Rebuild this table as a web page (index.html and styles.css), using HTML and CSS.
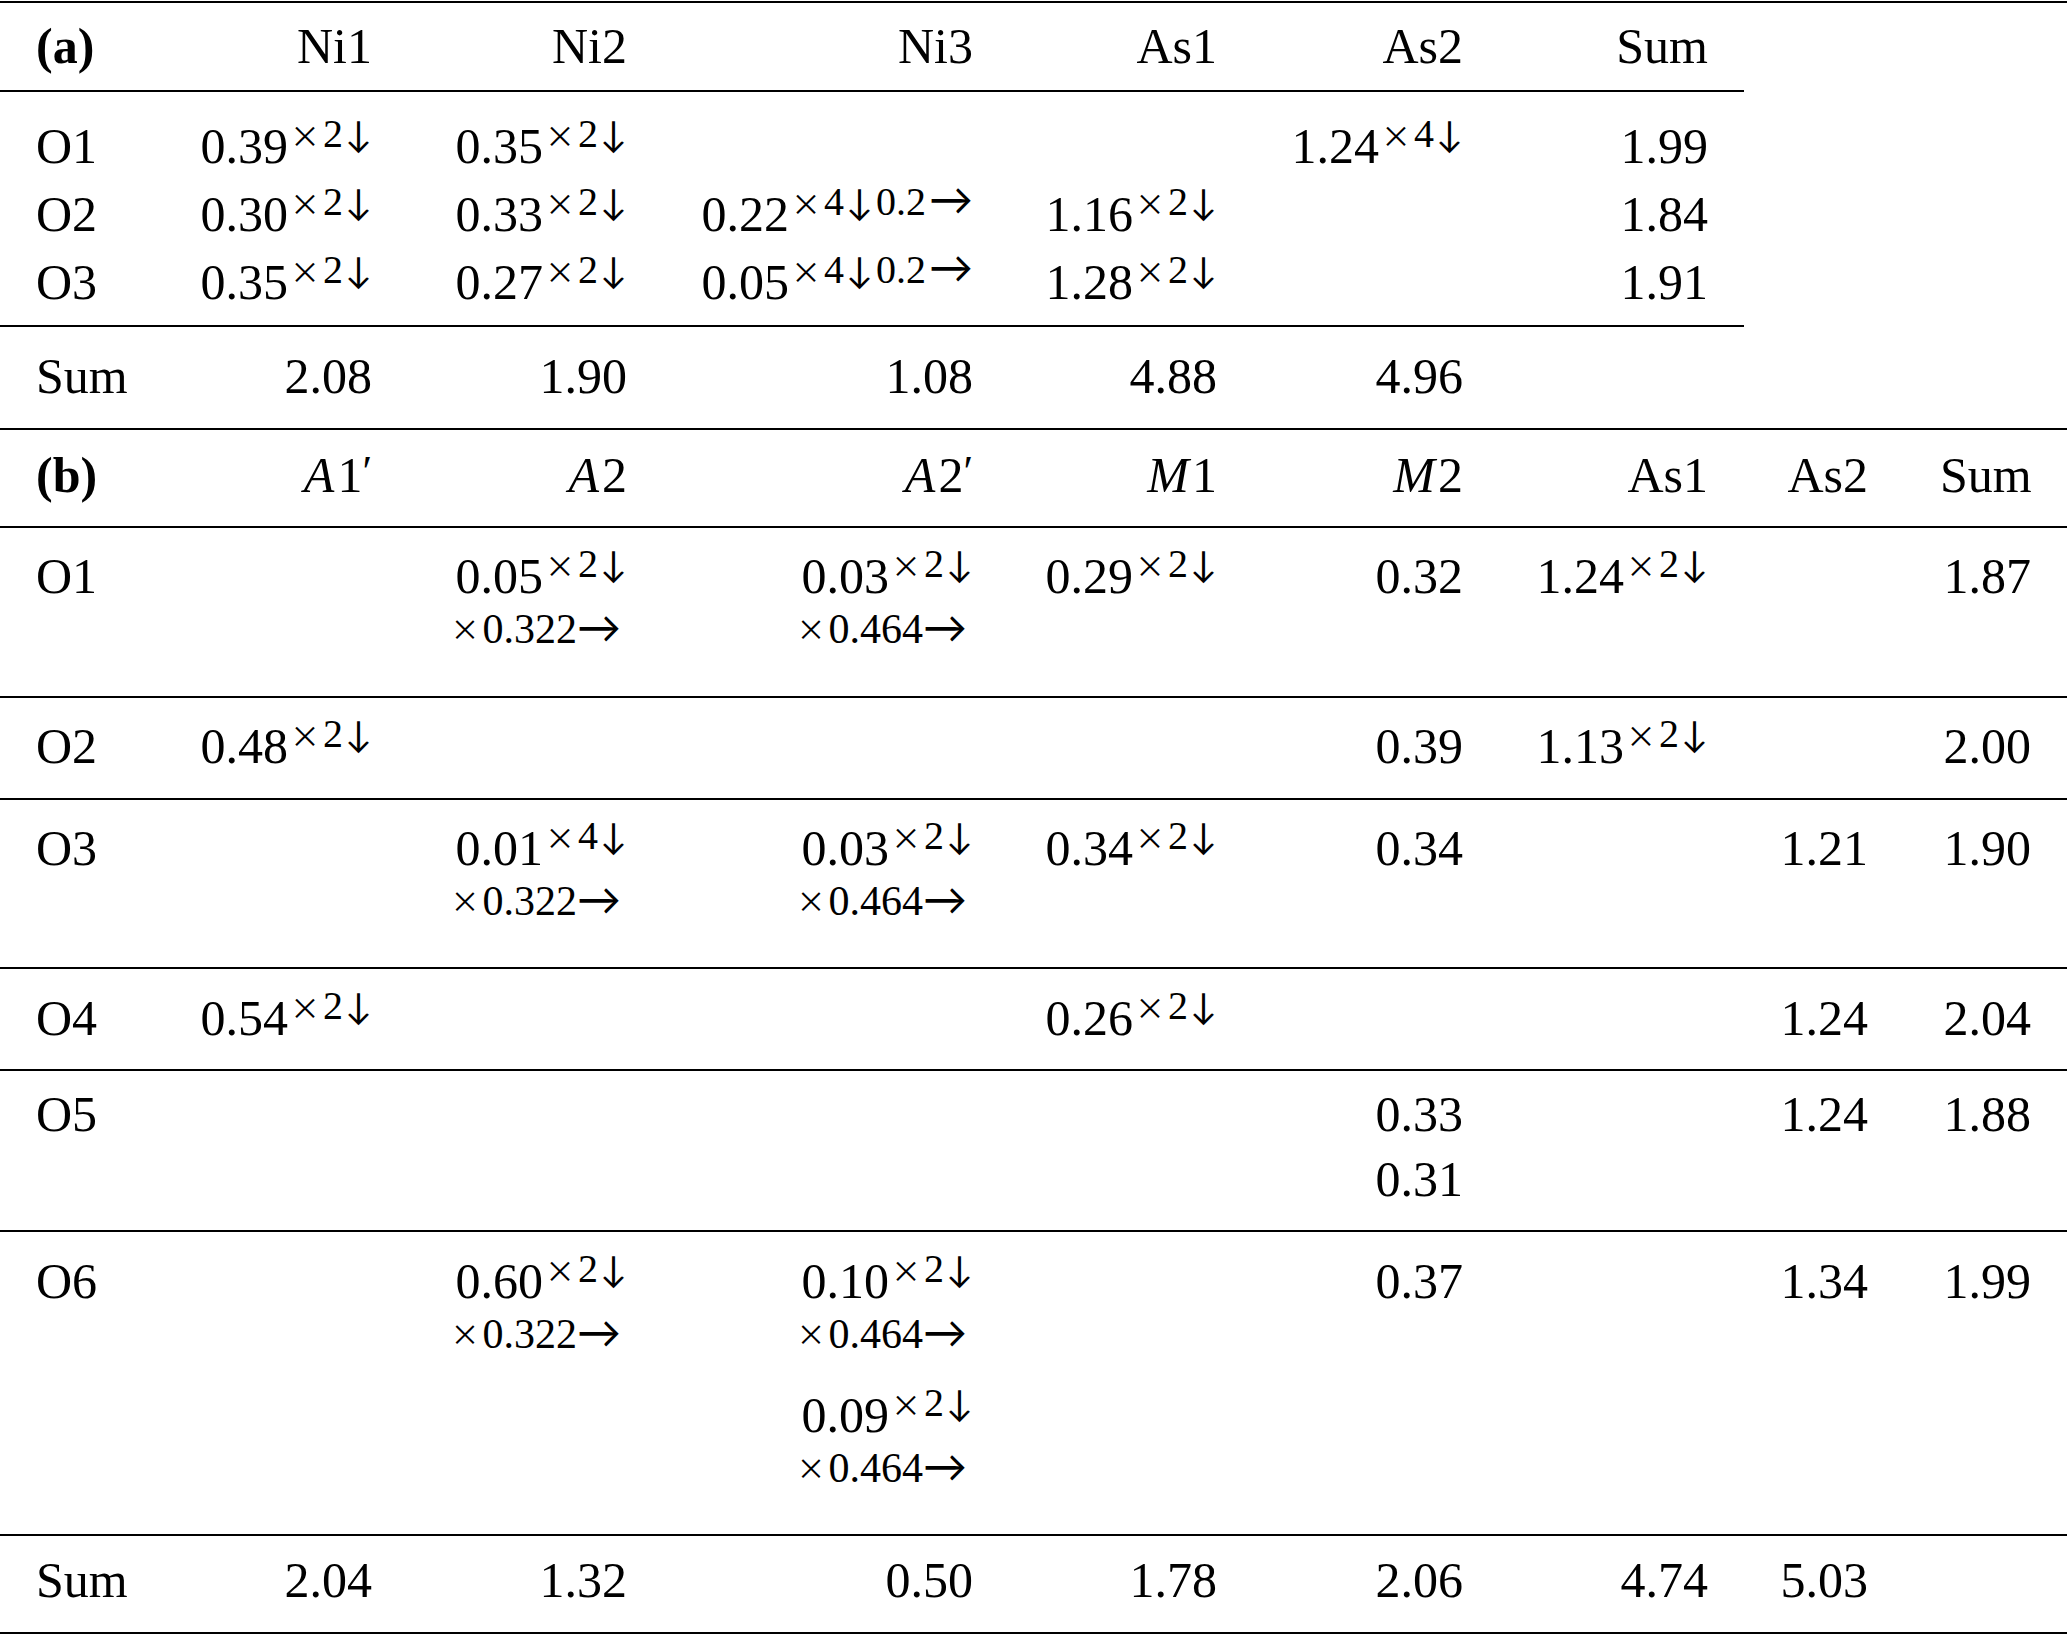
FILE: index.html
```html
<!DOCTYPE html>
<html>
<head>
<meta charset="utf-8">
<link rel="stylesheet" href="styles.css">
</head>
<body>
<div class="tbl">
  <div class="part-a">
    <div class="row row-a rule head-a">
      <div class="c l"><div class="v"><b>(a)</b></div></div>
      <div class="c"><div class="v">Ni1</div></div>
      <div class="c"><div class="v">Ni2</div></div>
      <div class="c"><div class="v">Ni3</div></div>
      <div class="c"><div class="v">As1</div></div>
      <div class="c"><div class="v">As2</div></div>
      <div class="c"><div class="v">Sum</div></div>
    </div>
    <div class="body-a rule">
      <div class="row row-a">
        <div class="c l"><div class="v">O1</div></div>
        <div class="c"><div class="v">0.39<span class="s"><span class="x">×</span>2<span class="ad">↓</span></span></div></div>
        <div class="c"><div class="v">0.35<span class="s"><span class="x">×</span>2<span class="ad">↓</span></span></div></div>
        <div class="c"></div>
        <div class="c"></div>
        <div class="c"><div class="v">1.24<span class="s"><span class="x">×</span>4<span class="ad">↓</span></span></div></div>
        <div class="c"><div class="v">1.99</div></div>
      </div>
      <div class="row row-a">
        <div class="c l"><div class="v">O2</div></div>
        <div class="c"><div class="v">0.30<span class="s"><span class="x">×</span>2<span class="ad">↓</span></span></div></div>
        <div class="c"><div class="v">0.33<span class="s"><span class="x">×</span>2<span class="ad">↓</span></span></div></div>
        <div class="c"><div class="v">0.22<span class="s"><span class="x">×</span>4<span class="ad mid">↓</span>0.2<span class="ar">→</span></span></div></div>
        <div class="c"><div class="v">1.16<span class="s"><span class="x">×</span>2<span class="ad">↓</span></span></div></div>
        <div class="c"></div>
        <div class="c"><div class="v">1.84</div></div>
      </div>
      <div class="row row-a">
        <div class="c l"><div class="v">O3</div></div>
        <div class="c"><div class="v">0.35<span class="s"><span class="x">×</span>2<span class="ad">↓</span></span></div></div>
        <div class="c"><div class="v">0.27<span class="s"><span class="x">×</span>2<span class="ad">↓</span></span></div></div>
        <div class="c"><div class="v">0.05<span class="s"><span class="x">×</span>4<span class="ad mid">↓</span>0.2<span class="ar">→</span></span></div></div>
        <div class="c"><div class="v">1.28<span class="s"><span class="x">×</span>2<span class="ad">↓</span></span></div></div>
        <div class="c"></div>
        <div class="c"><div class="v">1.91</div></div>
      </div>
    </div>
    <div class="row row-a sum-a">
      <div class="c l"><div class="v">Sum</div></div>
      <div class="c"><div class="v">2.08</div></div>
      <div class="c"><div class="v">1.90</div></div>
      <div class="c"><div class="v">1.08</div></div>
      <div class="c"><div class="v">4.88</div></div>
      <div class="c"><div class="v">4.96</div></div>
      <div class="c"></div>
    </div>
  </div>

  <div class="part-b">
    <div class="row row-b rule head-b">
      <div class="c l"><div class="v"><b>(b)</b></div></div>
      <div class="c"><div class="v"><i class="it">A</i>1<span class="pr">′</span></div></div>
      <div class="c"><div class="v"><i class="it">A</i>2</div></div>
      <div class="c"><div class="v"><i class="it">A</i>2<span class="pr">′</span></div></div>
      <div class="c"><div class="v"><i class="it">M</i>1</div></div>
      <div class="c"><div class="v"><i class="it">M</i>2</div></div>
      <div class="c"><div class="v">As1</div></div>
      <div class="c"><div class="v">As2</div></div>
      <div class="c"><div class="v">Sum</div></div>
    </div>
    <div class="row row-b rule r-o1">
      <div class="c l"><div class="v">O1</div></div>
      <div class="c"></div>
      <div class="c"><div class="v">0.05<span class="s"><span class="x">×</span>2<span class="ad">↓</span></span></div><div class="m"><span class="x">×</span>0.322<span class="ar">→</span></div></div>
      <div class="c"><div class="v">0.03<span class="s"><span class="x">×</span>2<span class="ad">↓</span></span></div><div class="m"><span class="x">×</span>0.464<span class="ar">→</span></div></div>
      <div class="c"><div class="v">0.29<span class="s"><span class="x">×</span>2<span class="ad">↓</span></span></div></div>
      <div class="c"><div class="v">0.32</div></div>
      <div class="c"><div class="v">1.24<span class="s"><span class="x">×</span>2<span class="ad">↓</span></span></div></div>
      <div class="c"></div>
      <div class="c"><div class="v">1.87</div></div>
    </div>
    <div class="row row-b rule r-o2">
      <div class="c l"><div class="v">O2</div></div>
      <div class="c"><div class="v">0.48<span class="s"><span class="x">×</span>2<span class="ad">↓</span></span></div></div>
      <div class="c"></div>
      <div class="c"></div>
      <div class="c"></div>
      <div class="c"><div class="v">0.39</div></div>
      <div class="c"><div class="v">1.13<span class="s"><span class="x">×</span>2<span class="ad">↓</span></span></div></div>
      <div class="c"></div>
      <div class="c"><div class="v">2.00</div></div>
    </div>
    <div class="row row-b rule r-o3">
      <div class="c l"><div class="v">O3</div></div>
      <div class="c"></div>
      <div class="c"><div class="v">0.01<span class="s"><span class="x">×</span>4<span class="ad">↓</span></span></div><div class="m"><span class="x">×</span>0.322<span class="ar">→</span></div></div>
      <div class="c"><div class="v">0.03<span class="s"><span class="x">×</span>2<span class="ad">↓</span></span></div><div class="m"><span class="x">×</span>0.464<span class="ar">→</span></div></div>
      <div class="c"><div class="v">0.34<span class="s"><span class="x">×</span>2<span class="ad">↓</span></span></div></div>
      <div class="c"><div class="v">0.34</div></div>
      <div class="c"></div>
      <div class="c"><div class="v">1.21</div></div>
      <div class="c"><div class="v">1.90</div></div>
    </div>
    <div class="row row-b rule r-o4">
      <div class="c l"><div class="v">O4</div></div>
      <div class="c"><div class="v">0.54<span class="s"><span class="x">×</span>2<span class="ad">↓</span></span></div></div>
      <div class="c"></div>
      <div class="c"></div>
      <div class="c"><div class="v">0.26<span class="s"><span class="x">×</span>2<span class="ad">↓</span></span></div></div>
      <div class="c"></div>
      <div class="c"></div>
      <div class="c"><div class="v">1.24</div></div>
      <div class="c"><div class="v">2.04</div></div>
    </div>
    <div class="row row-b rule r-o5">
      <div class="c l"><div class="v">O5</div></div>
      <div class="c"></div>
      <div class="c"></div>
      <div class="c"></div>
      <div class="c"></div>
      <div class="c"><div class="v">0.33</div><div class="v">0.31</div></div>
      <div class="c"></div>
      <div class="c"><div class="v">1.24</div></div>
      <div class="c"><div class="v">1.88</div></div>
    </div>
    <div class="row row-b rule r-o6">
      <div class="c l"><div class="v">O6</div></div>
      <div class="c"></div>
      <div class="c"><div class="v">0.60<span class="s"><span class="x">×</span>2<span class="ad">↓</span></span></div><div class="m"><span class="x">×</span>0.322<span class="ar">→</span></div></div>
      <div class="c"><div class="v">0.10<span class="s"><span class="x">×</span>2<span class="ad">↓</span></span></div><div class="m"><span class="x">×</span>0.464<span class="ar">→</span></div><div class="v">0.09<span class="s"><span class="x">×</span>2<span class="ad">↓</span></span></div><div class="m"><span class="x">×</span>0.464<span class="ar">→</span></div></div>
      <div class="c"></div>
      <div class="c"><div class="v">0.37</div></div>
      <div class="c"></div>
      <div class="c"><div class="v">1.34</div></div>
      <div class="c"><div class="v">1.99</div></div>
    </div>
    <div class="row row-b sum-b">
      <div class="c l"><div class="v">Sum</div></div>
      <div class="c"><div class="v">2.04</div></div>
      <div class="c"><div class="v">1.32</div></div>
      <div class="c"><div class="v">0.50</div></div>
      <div class="c"><div class="v">1.78</div></div>
      <div class="c"><div class="v">2.06</div></div>
      <div class="c"><div class="v">4.74</div></div>
      <div class="c"><div class="v">5.03</div></div>
      <div class="c"></div>
    </div>
  </div>
</div>
</body>
</html>
```

FILE: styles.css
```css
html, body {
  margin: 0;
  padding: 0;
  background: #fff;
}

body {
  color: #000;
  font-family: "Liberation Serif", "Times New Roman", serif;
  font-size: 50px;
}

.tbl {
  width: 2067px;
  margin-top: 1px;
  border-top: 2px solid #000;
  border-bottom: 2px solid #000;
}

.part-a {
  width: 1744px;
}

.part-b {
  border-top: 2px solid #000;
}

.row {
  display: grid;
  align-items: start;
}

.row-a {
  grid-template-columns: 162px 246px 255px 346px 244px 246px 245px;
}

.row-b {
  grid-template-columns: 162px 246px 255px 346px 244px 246px 245px 160px 163px;
}

.rule {
  border-bottom: 2px solid #000;
}

.c {
  padding: 0 36px;
  text-align: right;
  white-space: nowrap;
}

.c.l {
  text-align: left;
}

.v {
  line-height: 50px;
}

.v + .v {
  margin-top: 15px;
}

.m + .v {
  margin-top: 36px;
}

/* second line of a cell: multiplicity */
.m {
  font-size: 42px;
  line-height: 40px;
  margin-top: 8px;
  padding-right: 6px;
}

/* superscript */
.s {
  font-size: 40px;
  line-height: 0;
  vertical-align: 16px;
  margin-left: 2px;
}

/* multiplication sign */
.x {
  font-family: "Noto Sans CJK JP", "Liberation Serif", sans-serif;
  font-size: 30px;
  line-height: 0;
  margin-right: 3px;
}

.m .x {
  font-size: 29px;
  margin-right: 3px;
  vertical-align: 2px;
}

/* down arrow */
.ad {
  font-family: Lato, "Liberation Serif", sans-serif;
  font-size: 36px;
  line-height: 0;
  margin-left: 2px;
}

.ad.mid {
  margin-right: 3px;
}

/* right arrow */
.ar {
  font-family: Lato, "Liberation Serif", sans-serif;
  font-size: 44px;
  line-height: 0;
}

.s .ar {
  margin-left: 3px;
}

.it {
  font-style: italic;
  margin-right: 3px;
}

.pr {
  font-size: 44px;
  line-height: 0;
  vertical-align: 6px;
}

/* table (a) */
.head-a {
  padding: 18px 0 19px;
}

.body-a {
  padding: 20px 0 9px;
}

.body-a .v {
  line-height: 68px;
}

.sum-a {
  padding: 24px 0 27px;
}

/* table (b) */
.head-b {
  padding: 20px 0 26px;
}

.r-o1 {
  padding: 23px 0 47px;
}

.r-o2 {
  padding: 23px 0 27px;
}

.r-o3 {
  padding: 23px 0 46px;
}

.r-o4 {
  padding: 24px 0 26px;
}

.r-o5 {
  padding: 18px 0 26px;
}

.r-o6 {
  padding: 24px 0 46px;
}

.sum-b {
  padding: 19px 0 27px;
}
```
